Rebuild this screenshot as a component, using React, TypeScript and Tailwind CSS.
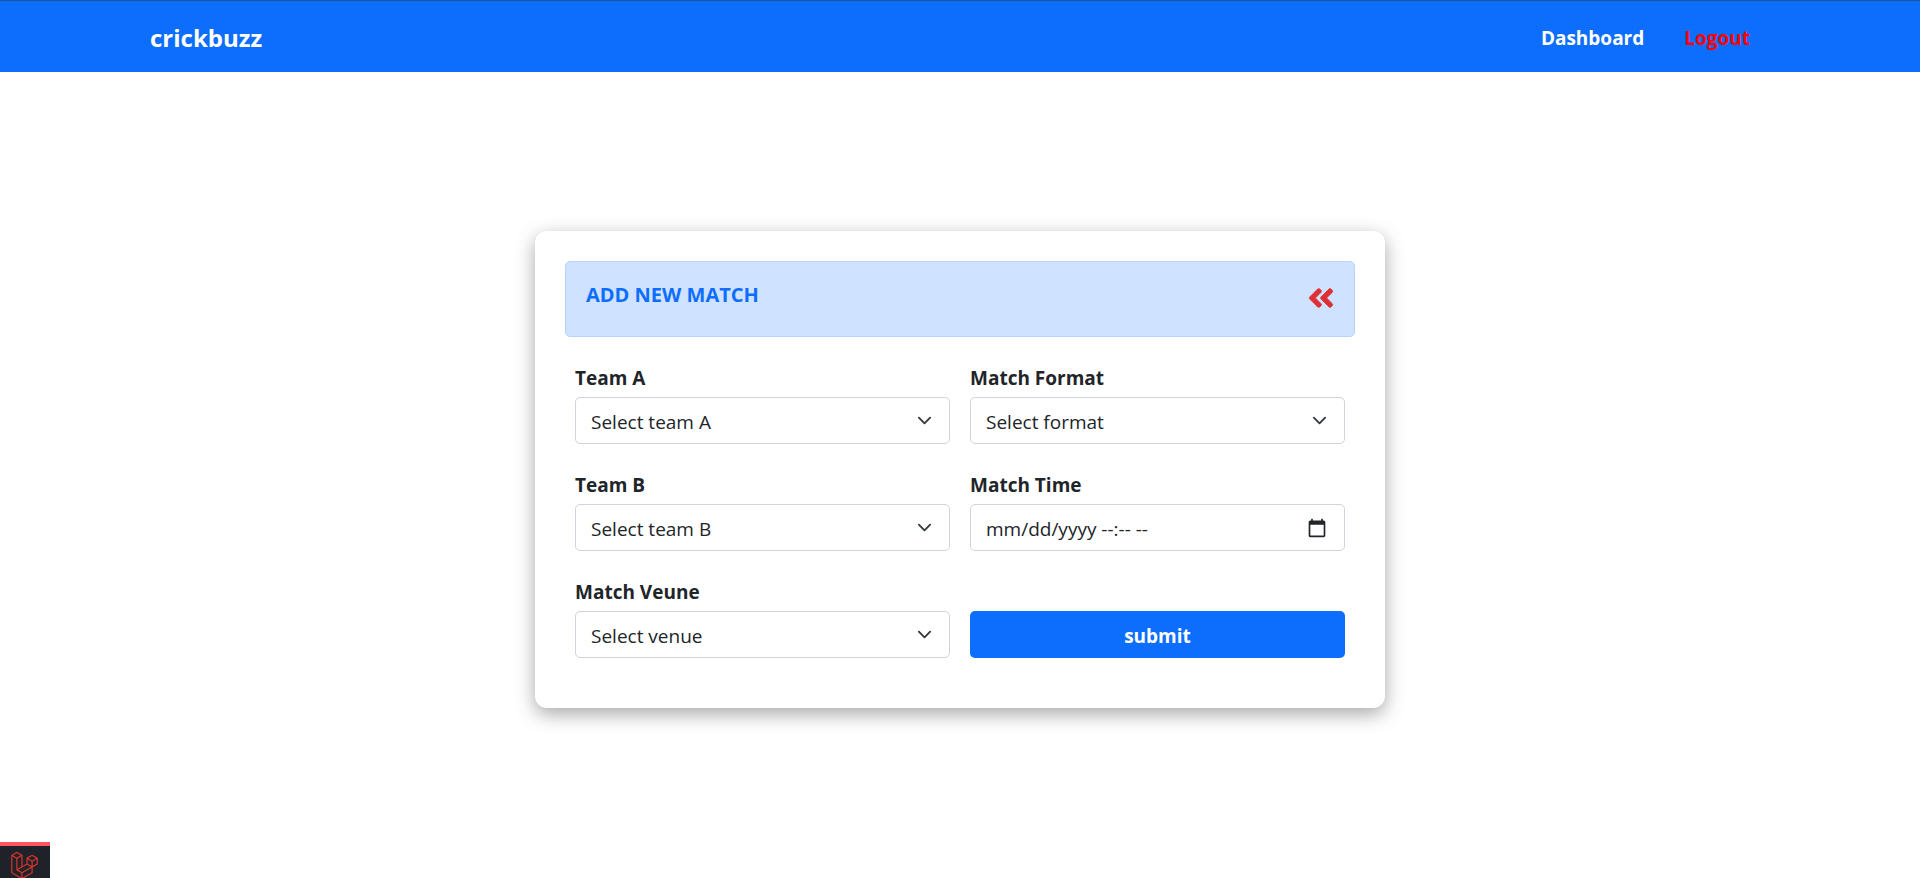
import { ReactNode } from "react";
import { FaAngleDoubleLeft } from "react-icons/fa";
import { SiLaravel } from "react-icons/si";

const fieldBox =
  "col-start-1 row-start-1 h-[47px] w-full appearance-none rounded-[5px] border border-[#ced4da] bg-white px-[15px] pt-[3px] text-[19px] text-[#212529]";

function Field({ id, label, children }: { id: string; label: string; children: ReactNode }) {
  return (
    <div>
      <label htmlFor={id} className="block h-[33px] text-[19px] leading-[28px] font-bold">
        {label}
      </label>
      <div className="grid items-center">{children}</div>
    </div>
  );
}

function SelectField({ id, label, placeholder }: { id: string; label: string; placeholder: string }) {
  return (
    <Field id={id} label={label}>
      <select id={id} defaultValue="" className={fieldBox}>
        <option value="">{placeholder}</option>
      </select>
      <svg
        viewBox="0 0 16 16"
        className="pointer-events-none col-start-1 row-start-1 mr-[18px] h-[15px] w-[15px] justify-self-end"
        fill="none"
        stroke="#343a40"
        strokeWidth="2"
        strokeLinecap="round"
        strokeLinejoin="round"
        aria-hidden="true"
      >
        <path d="m2 5 6 6 6-6" />
      </svg>
    </Field>
  );
}

export default function App() {
  return (
    <div className="flex min-h-screen flex-col bg-white font-['Open_Sans','Noto_Sans',sans-serif] text-[#212529]">
      <header className="border-t border-[#1d5599] bg-[#0d6efd]">
        <nav className="mx-auto flex h-[71px] max-w-[1650px] items-center justify-between px-[15px] pt-[3px] font-bold">
          <a href="#" className="text-[24px] text-white">
            crickbuzz
          </a>
          <div className="flex gap-10 pr-[20px] text-[19px]">
            <a href="#" className="text-white">
              Dashboard
            </a>
            <a href="#" className="text-[#ff0000]">
              Logout
            </a>
          </div>
        </nav>
      </header>

      <main className="flex flex-1 items-center justify-center pb-[11px]">
        <section className="w-full max-w-[850px] rounded-[12px] bg-white px-[30px] pt-[30px] pb-[50px] shadow-[0_6px_19px_rgba(0,0,0,0.35)]">
          <div className="flex h-[76px] items-start justify-between rounded-[5px] border border-[#b6d4fe] bg-[#cfe2ff] px-[20px] pt-[19px]">
            <h1 className="text-[20px] leading-[28px] font-bold text-[#0d6efd]">ADD NEW MATCH</h1>
            <a href="#" aria-label="Back" className="-mr-[2px] pt-[2px] text-[#dc3035]">
              <FaAngleDoubleLeft size={30} strokeWidth={14} />
            </a>
          </div>

          <form className="mt-[27px] grid grid-cols-2 gap-x-[20px] gap-y-[27px] px-[10px]">
            <SelectField id="team-a" label="Team A" placeholder="Select team A" />
            <SelectField id="format" label="Match Format" placeholder="Select format" />
            <SelectField id="team-b" label="Team B" placeholder="Select team B" />
            <Field id="time" label="Match Time">
              <input
                id="time"
                type="text"
                placeholder="mm/dd/yyyy --:-- --"
                className={`${fieldBox} placeholder:text-[#212529]`}
              />
              <button
                type="button"
                aria-label="Show date picker"
                className="col-start-1 row-start-1 mr-[18px] justify-self-end"
              >
                <svg viewBox="0 0 24 24" className="size-[20px]" fill="#212529" aria-hidden="true">
                  <path d="M20 3h-1V1h-2v2H7V1H5v2H4c-1.1 0-2 .9-2 2v16c0 1.1.9 2 2 2h16c1.1 0 2-.9 2-2V5c0-1.1-.9-2-2-2zm0 18H4V8h16v13z" />
                </svg>
              </button>
            </Field>
            <SelectField id="venue" label="Match Veune" placeholder="Select venue" />
            <button
              type="button"
              className="h-[47px] self-end rounded-[5px] bg-[#0d6efd] pt-[3px] text-[19px] font-bold text-white"
            >
              submit
            </button>
          </form>
        </section>
      </main>

      <button
        type="button"
        aria-label="Open debug bar"
        className="fixed bottom-0 left-0 flex h-[36px] w-[50px] justify-center border-t-4 border-[#ff5560] bg-[#1f2329] pt-[6px] text-[#f0382f]"
      >
        <SiLaravel size={27} className="mr-[2px] shrink-0" stroke="currentColor" strokeWidth={0.2} />
      </button>
    </div>
  );
}
